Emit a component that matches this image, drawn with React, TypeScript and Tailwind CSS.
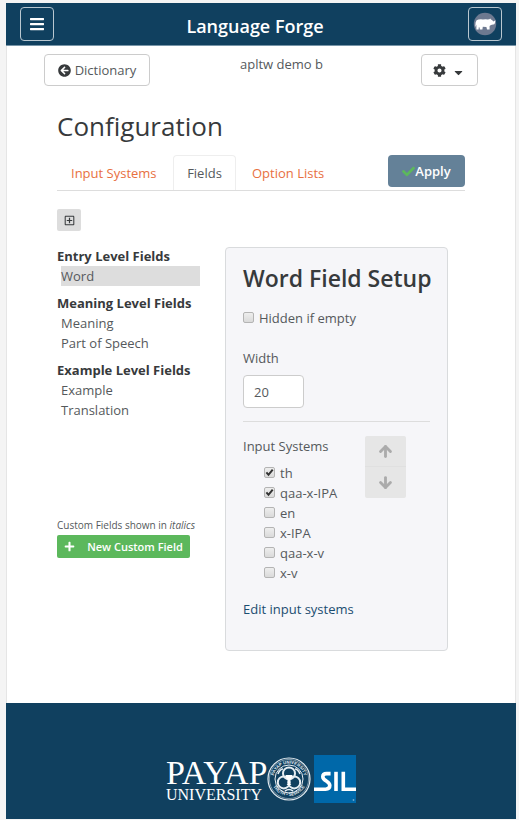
import { useState } from 'react'
import type { ReactNode } from 'react'
import { ArrowDown, ArrowUp } from 'lucide-react'
import {
  FaArrowCircleLeft,
  FaBars,
  FaCaretDown,
  FaCheck,
  FaCog,
  FaPlus,
  FaRegPlusSquare,
} from 'react-icons/fa'

const levels = [
  { title: 'Entry Level Fields', fields: ['Word'] },
  { title: 'Meaning Level Fields', fields: ['Meaning', 'Part of Speech'] },
  { title: 'Example Level Fields', fields: ['Example', 'Translation'] },
]

const inputSystems = [
  { name: 'th', on: true },
  { name: 'qaa-x-IPA', on: true },
  { name: 'en', on: false },
  { name: 'x-IPA', on: false },
  { name: 'qaa-x-v', on: false },
  { name: 'x-v', on: false },
]

function Check({ label, defaultChecked = false }: { label: string; defaultChecked?: boolean }) {
  return (
    <label className="flex items-start gap-[5px]">
      <span className="relative mt-1 size-[11px] shrink-0">
        <input
          type="checkbox"
          defaultChecked={defaultChecked}
          className="peer block size-[11px] appearance-none rounded-xs border border-[#b4b4b4] bg-linear-to-b from-[#eeeeee] to-[#dadada]"
        />
        <svg viewBox="0 0 11 11" className="pointer-events-none absolute inset-0 hidden size-[11px] peer-checked:block">
          <path d="M2.4 5.4 L4.5 7.8 L8.7 2.6" fill="none" stroke="#333" strokeWidth="2" />
        </svg>
      </span>
      {label}
    </label>
  )
}

function Rhino() {
  return (
    <svg viewBox="0 0 24 24" className="size-6" aria-hidden="true">
      <circle cx="12" cy="12" r="11.2" fill="#6d7990" />
      <path
        fill="#fff"
        d="M2.6 10.6 Q3.2 7.8 5.4 7.6 Q8 7 10 7.6 Q12.5 6.8 14.5 7.4 L16.4 7.2 L17.2 6.4 L18 7.6 Q19.4 8.2 20.4 9.4 L22.4 8.2 L22 11 Q21.4 12.8 20 12.6 L18 13 L16.6 14 L16.6 17.6 L14 17.6 L13.4 15 L9.8 14.8 L9.4 17.4 L6.8 17.4 L6.6 15.4 L5.8 15.2 L5.6 17.4 L3.4 17.4 L3.4 13.8 L3.2 12.4 L2.8 14.4 L2.3 14.4 Z"
      />
    </svg>
  )
}

function Seal() {
  return (
    <svg viewBox="0 0 44 44" className="size-11 shrink-0" role="img" aria-label="Payap University seal">
      <defs>
        <path id="sealTop" d="M7 26 A15.5 15.5 0 1 1 37 26" />
        <path id="sealBottom" d="M5.5 28 A18 18 0 0 0 38.5 28" />
      </defs>
      <g fill="none" stroke="#e6edf2">
        <circle cx="22" cy="22" r="21" strokeWidth="1.2" />
        <circle cx="22" cy="22" r="19.6" strokeWidth="0.5" />
        <circle cx="22" cy="22" r="14" strokeWidth="1" />
        <circle cx="22" cy="16.4" r="6" strokeWidth="2" />
        <circle cx="16.8" cy="25.4" r="6" strokeWidth="2" />
        <circle cx="27.2" cy="25.4" r="6" strokeWidth="2" />
        <path d="M11 17 Q13 12 16 12 M33 17 Q31 12 28 12 M18 34 Q22 31 26 34" strokeWidth="1.6" />
      </g>
      <path d="M18.6 18 H25.4 Q25 22 22.8 22.8 V26.5 L24.4 28 H19.6 L21.2 26.5 V22.8 Q19 22 18.6 18 Z" fill="#fff" />
      <g fill="#e6edf2" fontFamily="Liberation Sans, sans-serif" fontSize="4.4" fontWeight="700">
        <text textAnchor="middle">
          <textPath href="#sealTop" startOffset="50%">PAYAP UNIVERSITY</textPath>
        </text>
        <text textAnchor="middle">
          <textPath href="#sealBottom" startOffset="50%">TRUTH • SERVICE</textPath>
        </text>
      </g>
    </svg>
  )
}

function Sil() {
  return (
    <svg viewBox="0 0 42 48" className="h-12 w-[42px] shrink-0" role="img" aria-label="SIL">
      <rect width="42" height="48" fill="#0068a9" />
      <g fill="none" stroke="#fff" strokeWidth="3.6">
        <path d="M0 34.2 H11.6 Q15.8 34.2 15.8 30.6 Q15.8 28.2 12.6 26.2 Q8.8 24.2 8.8 21.8 Q8.8 18.6 12.6 18.6 H16.6" />
        <path d="M22 16.8 V36" />
        <path d="M29.3 16.8 V34.2 H42" />
      </g>
      <circle cx="39.5" cy="45" r="0.9" fill="#6fa8cf" />
    </svg>
  )
}

function MoveButton({ label, children }: { label: string; children: ReactNode }) {
  return (
    <button aria-label={label} className="flex h-[31px] w-[41px] items-center justify-center text-[#ababab]">
      {children}
    </button>
  )
}

export default function App() {
  const [selected, setSelected] = useState('Word')
  return (
    <div className="bg-[#f4f4f4] pt-[3px] pr-[3px] pb-px pl-[6px] font-['Open_Sans','Noto_Sans',sans-serif] text-[13px] leading-5 text-[#55595c]">
      <header className="flex h-[43px] items-center justify-between border-b border-[#7795a8] bg-[#10405f] px-[14px]">
        <button aria-label="Menu" className="flex size-[34px] items-center justify-center rounded-sm border border-[#b9c7d0] text-base text-white">
          <FaBars />
        </button>
        <h1 className="mt-1 mr-3 text-lg font-semibold text-white">Language Forge</h1>
        <button aria-label="Account" className="flex size-[34px] items-center justify-center rounded-sm border border-[#b9c7d0]">
          <Rhino />
        </button>
      </header>

      <main className="border-x border-[#e5e5e5] bg-white pb-[52px]">
        <div className="flex items-start justify-between px-[37px] pt-2">
          <button className="flex h-8 w-[106px] items-center justify-center gap-1 rounded-sm border border-[#ccc]">
            <FaArrowCircleLeft className="text-[#373a3c]" />
            Dictionary
          </button>
          <span className="mr-2">apltw demo b</span>
          <button aria-label="Settings" className="flex h-8 w-[57px] items-center justify-center gap-1.5 rounded-sm border border-[#ccc] text-[#373a3c]">
            <FaCog />
            <FaCaretDown className="mt-1" />
          </button>
        </div>

        <div className="px-[50px] pt-6">
          <h2 className="text-[26px] leading-8 text-[#373a3c]">Configuration</h2>

          <nav className="mt-[13px] flex h-9 items-start border-b border-[#ddd]">
            <a href="#input-systems" className="w-[116px] py-2 pl-[14px] text-[#e8703f]">Input Systems</a>
            <a href="#fields" className="h-[35px] w-[63px] rounded-t-sm border border-b-0 border-[#eee] py-[7px] text-center">Fields</a>
            <a href="#option-lists" className="py-2 pl-4 text-[#e8703f]">Option Lists</a>
            <button className="ml-auto flex h-8 w-[77px] items-center justify-center rounded-sm bg-[#648198] font-semibold text-white">
              <FaCheck className="text-[#5cb85c]" />
              Apply
            </button>
          </nav>

          <button aria-label="Expand all" className="mt-[18px] flex h-[22px] w-6 items-center justify-center rounded-xs bg-[#ddd] text-[11px] text-[#373a3c]">
            <FaRegPlusSquare />
          </button>

          <div className="mt-4 flex items-start gap-[25px]">
            <div className="w-[143px] shrink-0">
              <div className="-mt-px h-[271px]">
                {levels.map((level) => (
                  <section key={level.title} className="mb-[7px]">
                    <h3 className="font-bold text-[#373a3c]">{level.title}</h3>
                    {level.fields.map((field) => (
                      <button
                        key={field}
                        onClick={() => setSelected(field)}
                        className={`ml-1 block h-5 w-[139px] text-left ${field === selected ? 'bg-[#ddd]' : ''}`}
                      >
                        {field}
                      </button>
                    ))}
                  </section>
                ))}
              </div>
              <p className="text-[10px] leading-4 whitespace-nowrap">
                Custom Fields shown in <em>italics</em>
              </p>
              <button className="mt-[2px] flex h-[23px] w-[133px] items-center justify-center gap-3 rounded-xs bg-[#5cb85c] text-[11px] font-semibold whitespace-nowrap text-white">
                <FaPlus />
                New Custom Field
              </button>
            </div>

            <section className="mr-[17px] h-[404px] min-w-0 grow rounded-sm border border-[#d9dbdd] bg-[#f6f6f9] px-[17px] pt-[14px]">
              <h2 className="text-[23px] leading-8 font-semibold whitespace-nowrap text-[#373a3c]">Word Field Setup</h2>
              <div className="mt-[14px]">
                <Check label="Hidden if empty" />
              </div>
              <label htmlFor="width" className="mt-5 block">Width</label>
              <input id="width" type="text" defaultValue="20" className="mt-[7px] block h-[33px] w-[61px] rounded-sm border border-[#ccc] bg-white px-[10px]" />
              <hr className="mt-[13px] border-[#ddd]" />
              <div className="mt-[14px] flex items-start">
                <div className="w-[122px]">
                  <p>Input Systems</p>
                  <div className="mt-[7px] ml-[21px]">
                    {inputSystems.map((s) => (
                      <Check key={s.name} label={s.name} defaultChecked={s.on} />
                    ))}
                  </div>
                </div>
                <div className="divide-y divide-[#e0e0e0] overflow-hidden rounded-xs bg-[#e6e6e6]">
                  <MoveButton label="Move up"><ArrowUp size={17} strokeWidth={4} /></MoveButton>
                  <MoveButton label="Move down"><ArrowDown size={17} strokeWidth={4} /></MoveButton>
                </div>
              </div>
              <a href="#input-systems" className="mt-4 block text-[#1b4d70]">Edit input systems</a>
            </section>
          </div>
        </div>
      </main>

      <footer className="flex h-[116px] items-end justify-center bg-[#10405f] pb-4">
        <div className="flex items-center">
          <div className="w-[101px] font-['Liberation_Serif',serif] text-white">
            <div className="text-[34px] leading-8">PAYAP</div>
            <div className="text-base leading-3">UNIVERSITY</div>
          </div>
          <Seal />
          <div className="ml-[3px]">
            <Sil />
          </div>
        </div>
      </footer>
    </div>
  )
}
